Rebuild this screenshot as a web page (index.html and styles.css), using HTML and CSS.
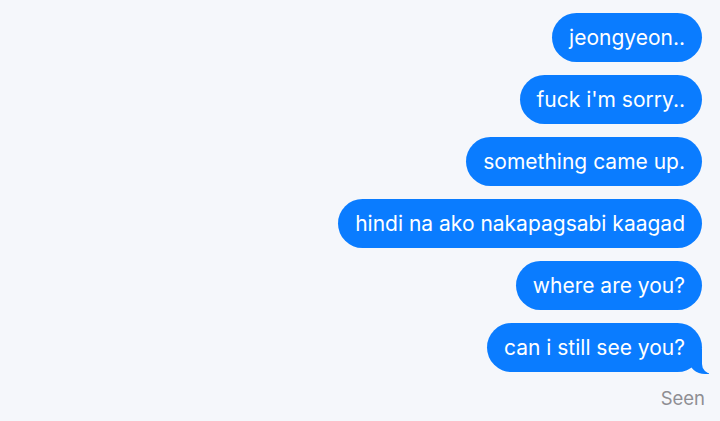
FILE: index.html
```html
<!DOCTYPE html>
<html lang="en">
<head>
  <meta charset="UTF-8">
  <meta name="viewport" content="width=device-width, initial-scale=1.0">
  <title>Messages</title>
  <link rel="stylesheet" href="styles.css">
</head>
<body>
  <div class="thread">
    <div class="bubble">jeongyeon..</div>
    <div class="bubble">fuck i'm sorry..</div>
    <div class="bubble">something came up.</div>
    <div class="bubble">hindi na ako nakapagsabi kaagad</div>
    <div class="bubble">where are you?</div>
    <div class="bubble tail">can i still see you?</div>
    <div class="status">Seen</div>
  </div>
</body>
</html>
```
FILE: styles.css
```css
body {
  margin: 0;
  background-color: #f5f7fb;
  font-family: Inter, "Open Sans", Arial, sans-serif;
}

.thread {
  display: flex;
  flex-direction: column;
  align-items: flex-end;
  gap: 13px;
  padding: 13px 18px 0 0;
}

.bubble {
  position: relative;
  height: 49px;
  line-height: 49px;
  padding: 0 17px;
  border-radius: 25px;
  background-color: #0a7cff;
  color: #fff;
  font-size: 21px;
  white-space: nowrap;
}

.tail::before {
  content: "";
  position: absolute;
  right: -7px;
  bottom: -2px;
  width: 20px;
  height: 25px;
  background-color: #0a7cff;
  border-bottom-left-radius: 16px 14px;
}

.tail::after {
  content: "";
  position: absolute;
  right: -26px;
  bottom: -2px;
  width: 26px;
  height: 25px;
  background-color: #f5f7fb;
  border-bottom-left-radius: 10px;
}

.status {
  margin-top: 2px;
  margin-right: -3px;
  color: #8e8e93;
  font-size: 18.5px;
}
```
